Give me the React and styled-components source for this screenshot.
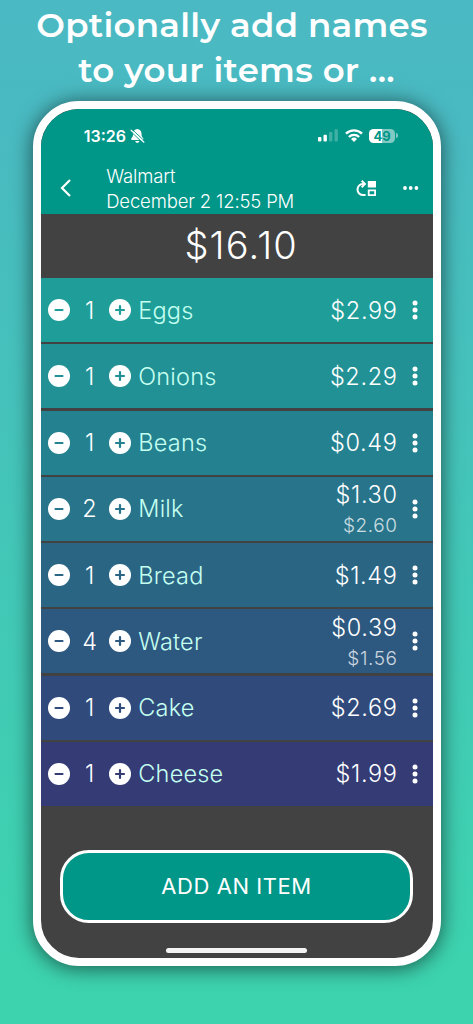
import React from "react";
import styled, { createGlobalStyle } from "styled-components";

const items = [
  { name: "Eggs", qty: 1, price: "$2.99", color: "#1f9e99" },
  { name: "Onions", qty: 1, price: "$2.29", color: "#219195" },
  { name: "Beans", qty: 1, price: "$0.49", color: "#248290" },
  { name: "Milk", qty: 2, price: "$1.30", total: "$2.60", color: "#28748a" },
  { name: "Bread", qty: 1, price: "$1.49", color: "#2a6684" },
  { name: "Water", qty: 4, price: "$0.39", total: "$1.56", color: "#2d5880" },
  { name: "Cake", qty: 1, price: "$2.69", color: "#304b7b" },
  { name: "Cheese", qty: 1, price: "$1.99", color: "#343b75" },
];

const Round = ({ color, plus }) => (
  <RoundButton>
    <svg width="22" height="22" viewBox="0 0 22 22">
      <circle cx="11" cy="11" r="11" fill="#fff" />
      <path
        d={plus ? "M7 11h8M11 7v8" : "M7.5 11h7"}
        stroke={color}
        strokeWidth="2.2"
        strokeLinecap="round"
      />
    </svg>
  </RoundButton>
);

const Item = ({ name, qty, price, total, color }) => (
  <Row $color={color}>
    <Round color={color} />
    <Qty>{qty}</Qty>
    <Round color={color} plus />
    <Name>{name}</Name>
    <Prices $double={!!total}>
      <Price>{price}</Price>
      {total && <Total>{total}</Total>}
    </Prices>
    <Dots width="6" height="20" viewBox="0 0 6 20">
      <circle cx="3" cy="3.1" r="2.5" />
      <circle cx="3" cy="10" r="2.5" />
      <circle cx="3" cy="16.9" r="2.5" />
    </Dots>
  </Row>
);

const BellOff = () => (
  <svg width="15" height="16" viewBox="0 0 15 16">
    <path
      d="M7.3 1c-2.6.3-4.2 2-4.2 4.6 0 2.6-.6 3.5-1.5 4.500-.9 1-.5 1.900.5 1.900h10.400c1 0 1.400-.9.5-1.900-.9-1-1.500-1.900-1.500-4.500 0-2.600-1.600-4.300-4.200-4.600z"
      fill="#fff"
    />
    <path d="M5.2 12.900h4.200c-.2 1.200-1 1.800-2.100 1.800s-1.900-.6-2.100-1.800z" fill="#fff" />
    <path d="M.5 3.200 12.800 14.700" stroke="#009688" strokeWidth="1" />
    <path d="M1.700 1 14.500 13" stroke="#009688" strokeWidth=".9" />
    <path d="M1.100 2.200 13.900 14.200" stroke="#fff" strokeWidth="1.200" strokeLinecap="round" />
  </svg>
);

const Signal = () => (
  <svg width="20" height="13" viewBox="0 0 20 13" fill="#fff">
    <rect x="0" y="8" width="3.4" height="4.6" rx="1" />
    <rect x="5.5" y="5.8" width="3.4" height="6.8" rx="1" />
    <rect x="11" y="3" width="3.4" height="9.6" rx="1" opacity=".25" />
    <rect x="16.5" y="0.3" width="3.4" height="12.3" rx="1" opacity=".25" />
  </svg>
);

const Wifi = () => (
  <svg width="18" height="13" viewBox="0 0 18 13" fill="none" stroke="#fff" strokeWidth="2.4">
    <path d="M1 4.700a11.400 11.400 0 0 1 16 0" />
    <path d="M3.900 8a7.200 7.200 0 0 1 10.200 0" />
    <path d="M9 12.900 6 9.900a4.300 4.300 0 0 1 6 0z" fill="#fff" stroke="none" />
  </svg>
);

const App = () => (
  <Page>
    <GlobalStyle />
    <Headline>
      <Line $shift="9px">Optionally add names</Line>
      <Line>to your items or ...</Line>
    </Headline>
    <Phone>
      <StatusBar>
        <Clock>13:26</Clock>
        <BellOff />
        <StatusIcons>
          <Signal />
          <Wifi />
          <Battery>
            <Level>49</Level>
            <Cap />
          </Battery>
        </StatusIcons>
      </StatusBar>
      <Header>
        <svg width="12" height="20" viewBox="0 0 12 20" fill="none">
          <path d="M10 2 2 10l8 8" stroke="#fff" strokeWidth="2.2" />
        </svg>
        <Heading>
          <Store>Walmart</Store>
          <Store>December 2 12:55 PM</Store>
        </Heading>
        <svg width="21" height="17" viewBox="0 0 21 17" fill="none">
          <path
            d="M9.600 15.100H7.500C3.900 15.100 1.500 12.500 1.500 9.500s2.300-5.500 5.300-5.500h1"
            stroke="#fff"
            strokeWidth="2"
          />
          <path d="M5.700.8 8.900 4 5.700 7.200" stroke="#fff" strokeWidth="2" />
          <path d="M11.800 1h8.200v6.400h-8.200z" fill="#fff" />
          <path d="M12.700 10.300h6.400v4.900h-6.400z" stroke="#fff" strokeWidth="1.800" />
        </svg>
        <MoreDots width="16" height="4" viewBox="0 0 16 4">
          <circle cx="2" cy="2" r="1.900" />
          <circle cx="7.700" cy="2" r="1.900" />
          <circle cx="13.400" cy="2" r="1.900" />
        </MoreDots>
      </Header>
      <Sum>$16.10</Sum>
      <List>
        {items.map((item) => (
          <Item key={item.name} {...item} />
        ))}
      </List>
      <AddButton>ADD AN ITEM</AddButton>
      <HomeBar />
    </Phone>
  </Page>
);

export default App;

const GlobalStyle = createGlobalStyle`
  * {
    box-sizing: border-box;
  }
  body {
    margin: 0;
    font-family: Inter, "Liberation Sans", sans-serif;
  }
`;

const Page = styled.div`
  width: 473px;
  height: 1024px;
  overflow: hidden;
  background: linear-gradient(180deg, #4bb9c3 0%, #49bac1 12%, #3dd3af 93%, #3dd3af 100%);
`;

const Headline = styled.h1`
  height: 101px;
  margin: 0;
  padding-top: 3px;
  font-family: Montserrat, Inter, sans-serif;
  font-size: 34px;
  font-weight: 600;
  line-height: 45px;
  letter-spacing: 0.28px;
  color: #fff;
  text-align: center;
`;

const Line = styled.div`
  padding-right: ${(p) => p.$shift || 0};
  white-space: nowrap;
`;

const Phone = styled.div`
  display: flex;
  flex-direction: column;
  width: 408px;
  height: 865px;
  margin-left: 32.7px;
  border: 8px solid #fff;
  border-radius: 46px;
  background: #424242;
  box-shadow: 0 2px 20px 1px rgba(0, 0, 0, 0.55);
  overflow: hidden;
  color: #fff;
`;

const StatusBar = styled.div`
  display: flex;
  align-items: center;
  height: 53px;
  padding: 0 35px 0 43px;
  background: #009688;
`;

const Clock = styled.span`
  width: 46px;
  font-size: 16px;
  font-weight: 600;
`;

const StatusIcons = styled.div`
  display: flex;
  align-items: center;
  gap: 6.5px;
  margin-left: auto;
`;

const Battery = styled.div`
  display: flex;
  align-items: center;
  gap: 1px;
`;

const Level = styled.div`
  width: 26px;
  height: 14px;
  border-radius: 4.5px;
  background: linear-gradient(90deg, #fff 49%, #80cac3 49%);
  color: #009688;
  font-size: 13px;
  font-weight: 700;
  line-height: 14px;
  text-align: center;
`;

const Cap = styled.div`
  width: 1.5px;
  height: 5px;
  border-radius: 0 2px 2px 0;
  background: #80cac3;
`;

const Header = styled.div`
  display: flex;
  align-items: center;
  height: 52px;
  padding: 0 13.5px 0 19px;
  background: #009688;
`;

const Heading = styled.div`
  flex: 1;
  padding: 2px 0 0 34.5px;
`;

const Store = styled.div`
  font-size: 18.5px;
  font-weight: 330;
  line-height: 25px;
  letter-spacing: -0.15px;
  white-space: nowrap;
`;

const MoreDots = styled.svg`
  margin-left: 26px;
  fill: #fff;
`;

const Sum = styled.div`
  height: 64px;
  padding-left: 9px;
  font-size: 38px;
  font-weight: 350;
  line-height: 63px;
  text-align: center;
  letter-spacing: 1.2px;
`;

const List = styled.div`
  display: flex;
  flex-direction: column;
  gap: 2.25px;
`;

const Row = styled.div`
  display: flex;
  align-items: center;
  height: 64px;
  padding: 0 14.5px 0 7.1px;
  background: ${(p) => p.$color};
`;

const RoundButton = styled.button`
  display: flex;
  padding: 0;
  border: 0;
  background: none;
`;

const Qty = styled.span`
  width: 39.5px;
  font-size: 23.5px;
  font-weight: 330;
  text-align: center;
`;

const Name = styled.span`
  flex: 1;
  padding-left: 7px;
  font-size: 23.5px;
  font-weight: 330;
  letter-spacing: 0.2px;
  color: #c4fff0;
`;

const Prices = styled.div`
  display: flex;
  flex-direction: column;
  align-items: flex-end;
  padding: ${(p) => (p.$double ? "3px" : "0")} 14.6px 0 0;
`;

const Price = styled.span`
  font-size: 23.5px;
  font-weight: 340;
  line-height: 31px;
  letter-spacing: 0.65px;
`;

const Total = styled.span`
  font-size: 19px;
  font-weight: 330;
  line-height: 31px;
  letter-spacing: 0.6px;
  opacity: 0.75;
`;

const Dots = styled.svg`
  fill: #fff;
`;

const AddButton = styled.button`
  height: 73px;
  margin: 44px 19.7px 0 19.3px;
  flex-shrink: 0;
  border: 3px solid #fff;
  border-radius: 29px;
  background: #009688;
  color: #fff;
  font-family: inherit;
  font-size: 22px;
  font-weight: 400;
  letter-spacing: 0.55px;
`;

const HomeBar = styled.div`
  width: 141px;
  height: 5px;
  margin: 25px auto 0;
  border-radius: 3px;
  background: #f4f4f4;
`;
